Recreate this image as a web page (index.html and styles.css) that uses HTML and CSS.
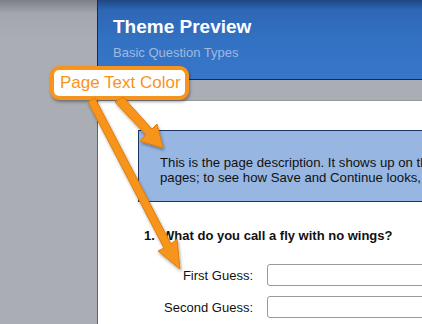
FILE: index.html
```html
<!DOCTYPE html>
<html lang="en">

<head>
    <meta charset="UTF-8">
    <title>Theme Preview</title>

    <link rel="stylesheet" href="styles.css">
</head>

<body>
<div class="window">
    <div class="main">
        <div class="header">
            <h1>Theme Preview</h1>
            <p class="subtitle">Basic Question Types</p>
        </div>
        <div class="page">
            <div class="description">
                This is the page description. It shows up on the top of all<br>
                pages; to see how Save and Continue looks, click Next.
            </div>
            <h2 class="question">1.&nbsp; What do you call a fly with no wings?</h2>
            <div class="field">
                <label>First Guess:</label>
                <div class="input"></div>
            </div>
            <div class="field">
                <label>Second Guess:</label>
                <div class="input"></div>
            </div>
        </div>
    </div>
</div>

<!-- annotation callout over the screenshot -->
<div class="callout">Page Text Color</div>
<svg class="arrows" width="422" height="324" viewBox="0 0 422 324">
    <defs>
        <filter id="shadow" x="-20%" y="-20%" width="140%" height="140%">
            <feDropShadow dx="1" dy="2" stdDeviation="1.5" flood-color="#000" flood-opacity="0.35"/>
        </filter>
    </defs>
    <g filter="url(#shadow)" fill="#f7941d" stroke="#e07d0a" stroke-width="1" stroke-linejoin="round">
        <path d="M88 102 L95 98 L171 244 L177 239 L180 269 L158 251 L164 248 Z"/>
        <path d="M115 102 L123 97 L152 129 L157 124 L163 148 L140 141 L146 135 Z"/>
    </g>
</svg>
</body>

</html>
```

FILE: styles.css
```css
body {
    margin: 0;
    width: 422px;
    height: 324px;
    overflow: hidden;
    background: linear-gradient(#7d8086 0, #a4a7ae 14px, #aaadb4 40px);
    font-family: "Liberation Sans", Arial, sans-serif;
    position: relative;
}

.window {
    display: flex;
    padding-left: 97px;
}

.main {
    width: 325px;
    overflow: hidden;
}

.header {
    height: 80px;
    box-sizing: border-box;
    padding: 16px 0 0 15px;
    background: linear-gradient(#1f4783 0, #2e67b5 10px, #3371c2 40px, #3777c9 80px);
    border-left: 1px solid #1a2b49;
    border-bottom: 1px solid #1a2b49;
}

.header h1 {
    margin: 0;
    color: #fff;
    font-size: 19px;
    font-weight: bold;
    line-height: 22px;
}

.subtitle {
    margin: 8px 0 0;
    color: #9fb9e0;
    font-size: 13px;
    line-height: 14px;
}

.page {
    margin-top: 20px;
    height: 230px;
    background: #fff;
    border-left: 1px solid #5f6268;
    border-top: 1px solid #94979d;
    padding: 29px 0 0 40px;
    box-sizing: border-box;
}

.description {
    height: 72px;
    box-sizing: border-box;
    padding: 24px 0 0 21px;
    background: #97b6e2;
    border: 1px solid #1d3461;
    border-right: none;
    color: #111;
    font-size: 13.2px;
    line-height: 15px;
    white-space: nowrap;
}

.question {
    margin: 26px 0 0 6px;
    font-size: 13px;
    font-weight: bold;
    color: #111;
    line-height: 16px;
}

.field {
    display: flex;
    align-items: center;
    margin-top: 20px;
}

.field + .field {
    margin-top: 10px;
}

.field label {
    flex: none;
    width: 129px;
    text-align: right;
    padding-right: 14px;
    box-sizing: border-box;
    font-size: 13px;
    color: #111;
    white-space: nowrap;
}

.input {
    flex: none;
    width: 200px;
    height: 22px;
    box-sizing: border-box;
    border: 1px solid #9a9a9a;
    border-radius: 3px;
    background: #fff;
}

.callout {
    position: absolute;
    left: 50px;
    top: 66px;
    width: 139px;
    height: 34px;
    box-sizing: border-box;
    border: 4px solid #f7941d;
    border-radius: 9px;
    background: #fff;
    color: #f7941d;
    font-size: 17px;
    line-height: 26px;
    padding-left: 6px;
    box-shadow: 1px 2px 3px rgba(0, 0, 0, 0.35);
}

.arrows {
    position: absolute;
    left: 0;
    top: 0;
}
```
